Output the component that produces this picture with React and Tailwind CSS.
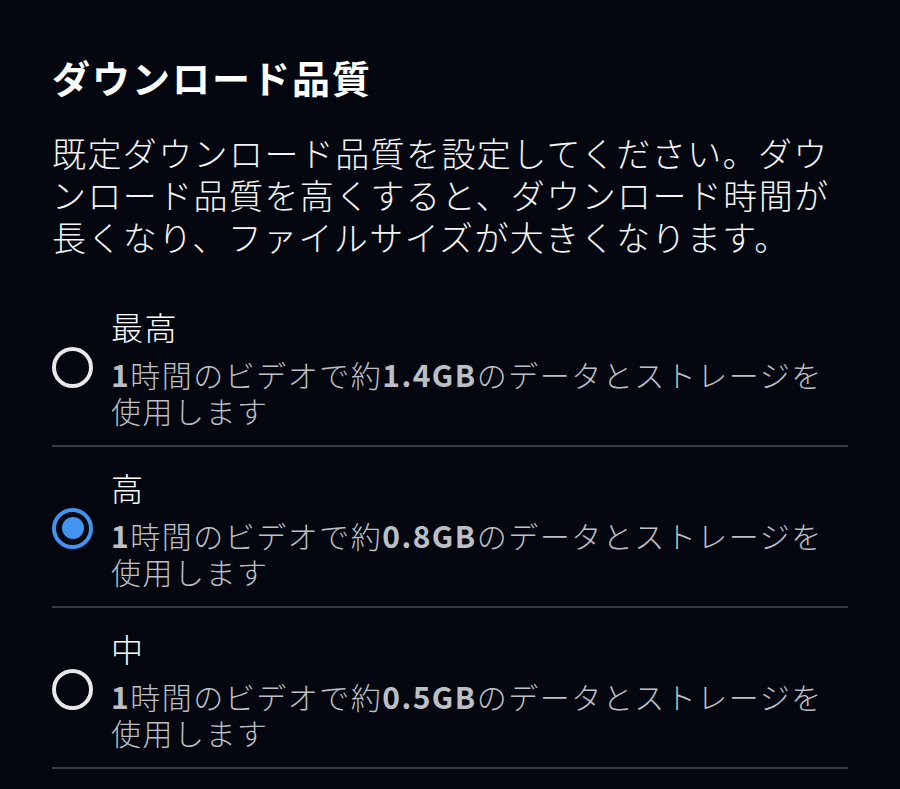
import { useState } from 'react'

const options = [
  { id: 'best', label: '最高', size: '1.4GB' },
  { id: 'high', label: '高', size: '0.8GB' },
  { id: 'medium', label: '中', size: '0.5GB' },
]

function Radio({ checked }) {
  return (
    <span
      className={
        'flex h-[41px] w-[41px] shrink-0 items-center justify-center rounded-full border-[4px] ' +
        (checked ? 'border-[#4195f0]' : 'border-[#e8e8e8]')
      }
    >
      {checked && <span className="h-[22px] w-[22px] rounded-full bg-[#4195f0]" />}
    </span>
  )
}

export default function App() {
  const [quality, setQuality] = useState('high')

  return (
    <div className="min-h-screen bg-[#04070f] px-[52px] pt-[52px] font-['Noto_Sans_CJK_JP','Noto_Sans',sans-serif] text-white">
      <h1 className="text-[38px] font-bold leading-[50px] tracking-[2px]">ダウンロード品質</h1>
      <p className="mt-[30px] text-[34px] font-light leading-[42px] tracking-[1.4px] text-[#f4f4f4]">
        既定ダウンロード品質を設定してください。ダウンロード品質を高くすると、ダウンロード時間が長くなり、ファイルサイズが大きくなります。
      </p>

      <ul className="mt-[28px]">
        {options.map((o) => (
          <li key={o.id} className="border-b-2 border-[#373c44]">
            <button
              type="button"
              onClick={() => setQuality(o.id)}
              className="flex w-full items-center gap-[18px] pt-[20px] pb-[17px] text-left"
            >
              <Radio checked={quality === o.id} />
              <span className="flex flex-col">
                <span className="text-[32px] font-light leading-[40px] tracking-[1.5px] text-white">{o.label}</span>
                <span className="mt-[10px] text-[30px] font-light leading-[36px] tracking-[1.5px] text-[#bcbfc4]">
                  <b className="font-bold">1</b>時間のビデオで約<b className="font-bold">{o.size}</b>
                  のデータとストレージを使用します
                </span>
              </span>
            </button>
          </li>
        ))}
      </ul>
    </div>
  )
}
